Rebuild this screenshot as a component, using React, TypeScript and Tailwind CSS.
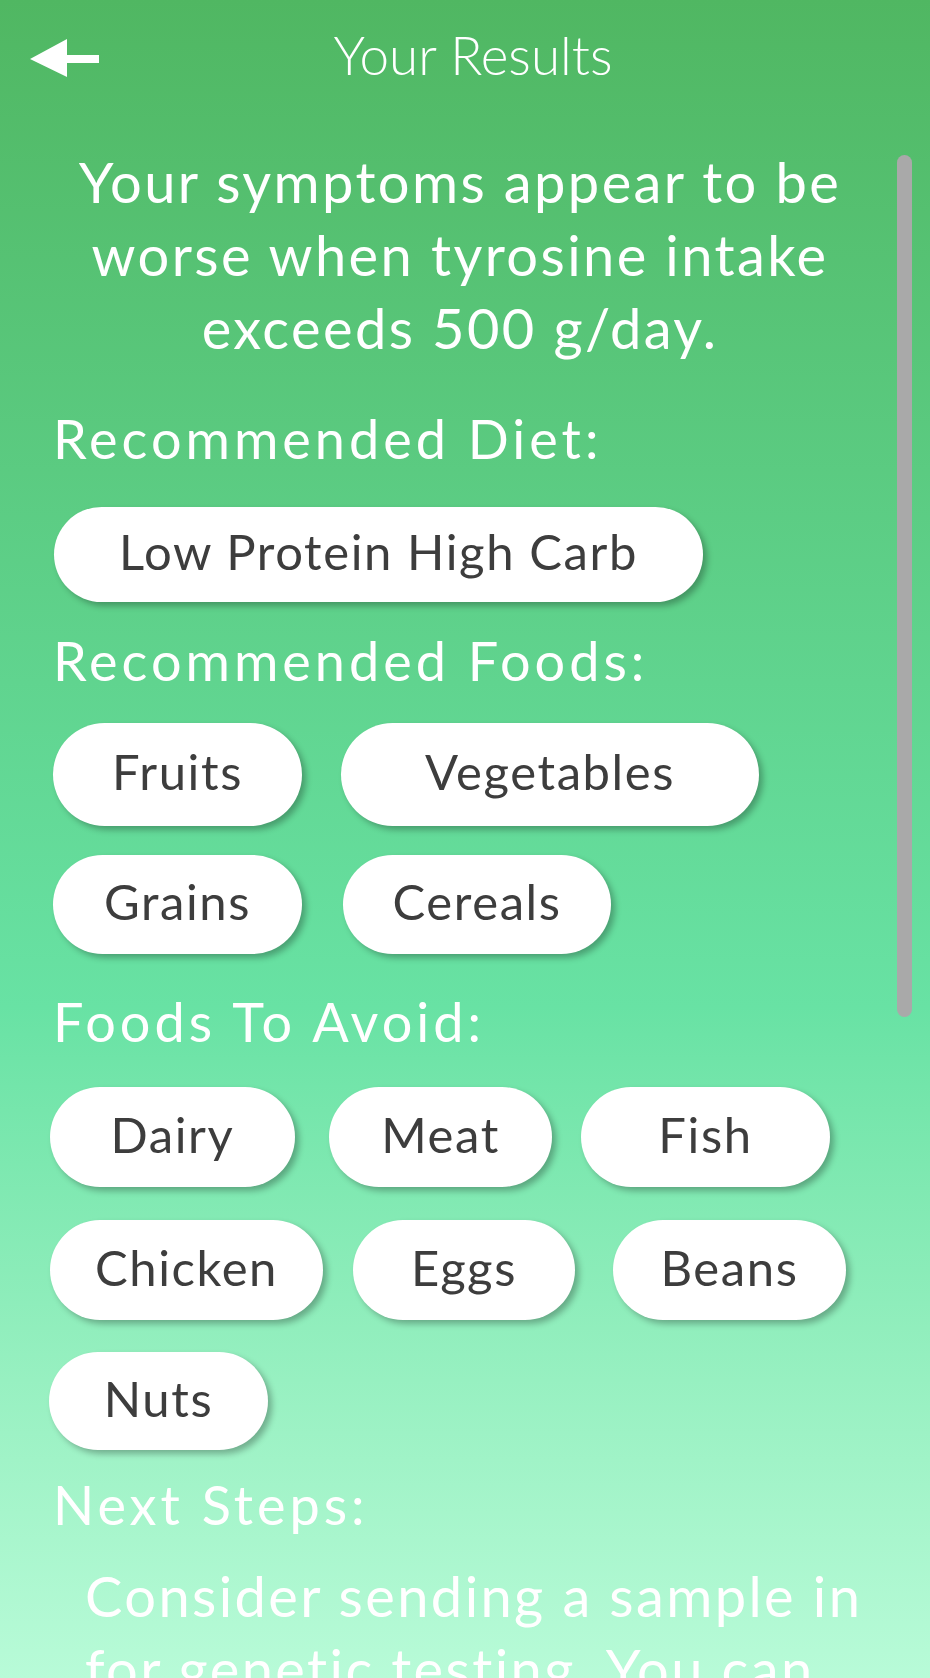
import React from 'react';

type Pill = {
    label: string;
    ml: string;
    w: string;
};

type PillRow = {
    mt: string;
    h: string;
    pills: Pill[];
};

const dietRows: PillRow[] = [
    { mt: 'mt-[37px]', h: 'h-[95px]', pills: [{ label: 'Low Protein High Carb', ml: 'ml-[4px]', w: 'w-[649px]' }] },
];

const foodRows: PillRow[] = [
    {
        mt: 'mt-[31px]',
        h: 'h-[103px]',
        pills: [
            { label: 'Fruits', ml: 'ml-[3px]', w: 'w-[249px]' },
            { label: 'Vegetables', ml: 'ml-[39px]', w: 'w-[418px]' },
        ],
    },
    {
        mt: 'mt-[29px]',
        h: 'h-[99px]',
        pills: [
            { label: 'Grains', ml: 'ml-[3px]', w: 'w-[249px]' },
            { label: 'Cereals', ml: 'ml-[41px]', w: 'w-[268px]' },
        ],
    },
];

const avoidRows: PillRow[] = [
    {
        mt: 'mt-[34px]',
        h: 'h-[100px]',
        pills: [
            { label: 'Dairy', ml: 'ml-0', w: 'w-[245px]' },
            { label: 'Meat', ml: 'ml-[34px]', w: 'w-[223px]' },
            { label: 'Fish', ml: 'ml-[29px]', w: 'w-[249px]' },
        ],
    },
    {
        mt: 'mt-[33px]',
        h: 'h-[100px]',
        pills: [
            { label: 'Chicken', ml: 'ml-0', w: 'w-[273px]' },
            { label: 'Eggs', ml: 'ml-[30px]', w: 'w-[222px]' },
            { label: 'Beans', ml: 'ml-[38px]', w: 'w-[233px]' },
        ],
    },
    {
        mt: 'mt-[32px]',
        h: 'h-[98px]',
        pills: [{ label: 'Nuts', ml: 'ml-[-1px]', w: 'w-[219px]' }],
    },
];

const BackArrow: React.FC = () => (
    <svg width="70" height="38" viewBox="0 0 70 38" className="mt-[7px] shrink-0">
        <polygon points="0,20 37,0 37,16 69,16 69,24 37,24 37,38" fill="#ffffff" />
    </svg>
);

const Pills: React.FC<{ rows: PillRow[] }> = ({ rows }) => (
    <>
        {rows.map((row, i) => (
            <div key={i} className={`flex ${row.mt}`}>
                {row.pills.map((pill) => (
                    <div
                        key={pill.label}
                        className={`${pill.ml} ${pill.w} ${row.h} flex shrink-0 items-center justify-center rounded-full bg-white pb-[6px] text-[49px] leading-[59px] tracking-[1.6px] text-[#3d3d3d] shadow-[4px_4px_6px_rgba(0,0,0,0.28)]`}
                    >
                        {pill.label}
                    </div>
                ))}
            </div>
        ))}
    </>
);

const Heading: React.FC<{ mt: string; children: React.ReactNode }> = ({ mt, children }) => (
    <h2 className={`${mt} pl-[3px] text-[54px] leading-[62px] tracking-[4px] text-white`}>{children}</h2>
);

const App: React.FC = () => {
    return (
        <div
            className="relative h-[1678px] w-full overflow-hidden bg-linear-to-b from-[#50b762] via-[#68e2a4] via-60% to-[#b8fbd8]"
            style={{ fontFamily: 'Lato, "Open Sans", sans-serif' }}
        >
            <header className="flex h-[109px] items-center px-[30px]">
                <button className="flex items-center">
                    <BackArrow />
                </button>
                <h1 className="flex-1 pr-[54px] text-center text-[53px] font-light leading-[64px] text-white">
                    Your Results
                </h1>
            </header>

            <main className="px-[50px]">
                <p className="mt-[36px] pr-[10px] text-center text-[56px] leading-[73px] tracking-[2.4px] text-white">
                    Your symptoms appear to be worse when tyrosine intake exceeds 500 g/day.
                </p>

                <Heading mt="mt-[44px]">Recommended Diet:</Heading>
                <Pills rows={dietRows} />

                <Heading mt="mt-[28px]">Recommended Foods:</Heading>
                <Pills rows={foodRows} />

                <Heading mt="mt-[37px]">Foods To Avoid:</Heading>
                <Pills rows={avoidRows} />

                <Heading mt="mt-[24px]">Next Steps:</Heading>
                <p className="mt-[23px] mr-[-30px] pl-[35px] text-[56px] leading-[73px] tracking-[2.4px] text-white">
                    Consider sending a sample in for genetic testing. You can
                </p>
            </main>

            {/* scroll indicator */}
            <div className="absolute right-[18px] top-[155px] h-[862px] w-[15px] rounded-full bg-[#a9a9a9]" />
        </div>
    );
};

export default App;
